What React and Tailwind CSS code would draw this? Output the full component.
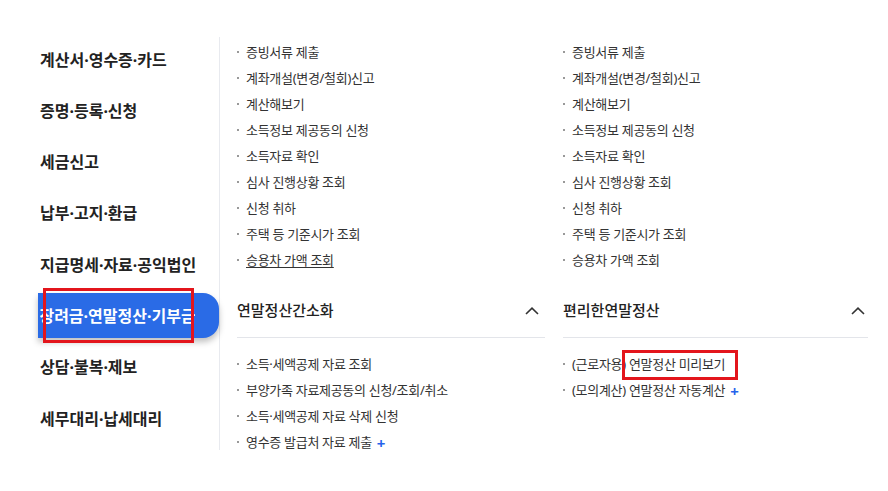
import React from "react";

const menu = [
  "계산서·영수증·카드",
  "증명·등록·신청",
  "세금신고",
  "납부·고지·환급",
  "지급명세·자료·공익법인",
  "장려금·연말정산·기부금",
  "상담·불복·제보",
  "세무대리·납세대리",
];

const topItems = [
  "증빙서류 제출",
  "계좌개설(변경/철회)신고",
  "계산해보기",
  "소득정보 제공동의 신청",
  "소득자료 확인",
  "심사 진행상황 조회",
  "신청 취하",
  "주택 등 기준시가 조회",
  "승용차 가액 조회",
];

function Chevron() {
  return (
    <svg width="14" height="8" viewBox="0 0 14 8" fill="none">
      <polyline points="1,7 7,1.2 13,7" stroke="#333" strokeWidth="1.6" />
    </svg>
  );
}

function Item({ children, underline, plus }) {
  return (
    <li className="flex items-center h-[26px] text-[13px] text-[#333] tracking-[-0.3px]">
      <span className="w-[2px] h-[2px] bg-[#999] mr-[7px] -mt-[3px]" />
      <span className={underline ? "underline underline-offset-2" : ""}>{children}</span>
      {plus && <span className="ml-[5px] text-[#2563eb] text-[15px] font-bold leading-none">+</span>}
    </li>
  );
}

function Column({ title, lower, underlineLast, chevronPad }) {
  return (
    <div className="flex flex-col">
      <ul className="pt-[40px]">
        {topItems.map((t, i) => (
          <Item key={t} underline={underlineLast && i === topItems.length - 1}>{t}</Item>
        ))}
      </ul>
      <div className={`mt-[20px] h-[44px] pb-[10px] flex items-center justify-between border-b border-[#e3e5ea] ${chevronPad}`}>
        <span className="text-[15px] font-medium text-[#222]">{title}</span>
        <Chevron />
      </div>
      <ul className="pt-[14px]">
        {lower.map((l) => (
          <Item key={l.t} plus={l.plus}>{l.t}</Item>
        ))}
      </ul>
    </div>
  );
}

export default function App() {
  return (
    <div
      className="relative w-[888px] h-[491px] bg-white overflow-hidden"
      style={{ fontFamily: '"Noto Sans", "Noto Sans CJK KR", sans-serif' }}
    >
      <div className="flex h-[450px] overflow-hidden">
        <aside className="w-[220px] mt-[37px] border-r border-[#e8eaef] flex flex-col gap-[6.3px]">
          {menu.map((m, i) =>
            i === 5 ? (
              <div
                key={m}
                className="ml-[38px] w-[181px] h-[45px] shrink-0 bg-[#2a6be6] rounded-r-[16px] shadow-[0_4px_6px_rgba(0,0,0,0.25)] flex items-center"
              >
                <span className="ml-[2px] w-[155px] overflow-hidden whitespace-nowrap flex justify-center text-white text-[16px] font-bold">
                  <span className="shrink-0">{m}</span>
                </span>
              </div>
            ) : (
              <div key={m} className="h-[45px] shrink-0 flex items-center pl-[40px] text-[16px] font-bold text-[#222] whitespace-nowrap">
                {m}
              </div>
            )
          )}
        </aside>
        <main className="flex gap-[18px] pl-[17px]">
          <div className="w-[308px]">
            <Column
              title="연말정산간소화"
              underlineLast
              chevronPad="pr-[6px]"
              lower={[
                { t: "소득·세액공제 자료 조회" },
                { t: "부양가족 자료제공동의 신청/조회/취소" },
                { t: "소득·세액공제 자료 삭제 신청" },
                { t: "영수증 발급처 자료 제출", plus: true },
              ]}
            />
          </div>
          <div className="w-[305px]">
            <Column
              title="편리한연말정산"
              chevronPad="pr-[3px]"
              lower={[
                { t: "(근로자용) 연말정산 미리보기" },
                { t: "(모의계산) 연말정산 자동계산", plus: true },
              ]}
            />
          </div>
        </main>
      </div>
      <div className="absolute left-[43px] top-[288px] w-[151px] h-[55px] border-[3px] border-[#e3151c]" />
      <div className="absolute left-[622px] top-[350px] w-[116px] h-[30px] border-[3px] border-[#e3151c]" />
    </div>
  );
}
